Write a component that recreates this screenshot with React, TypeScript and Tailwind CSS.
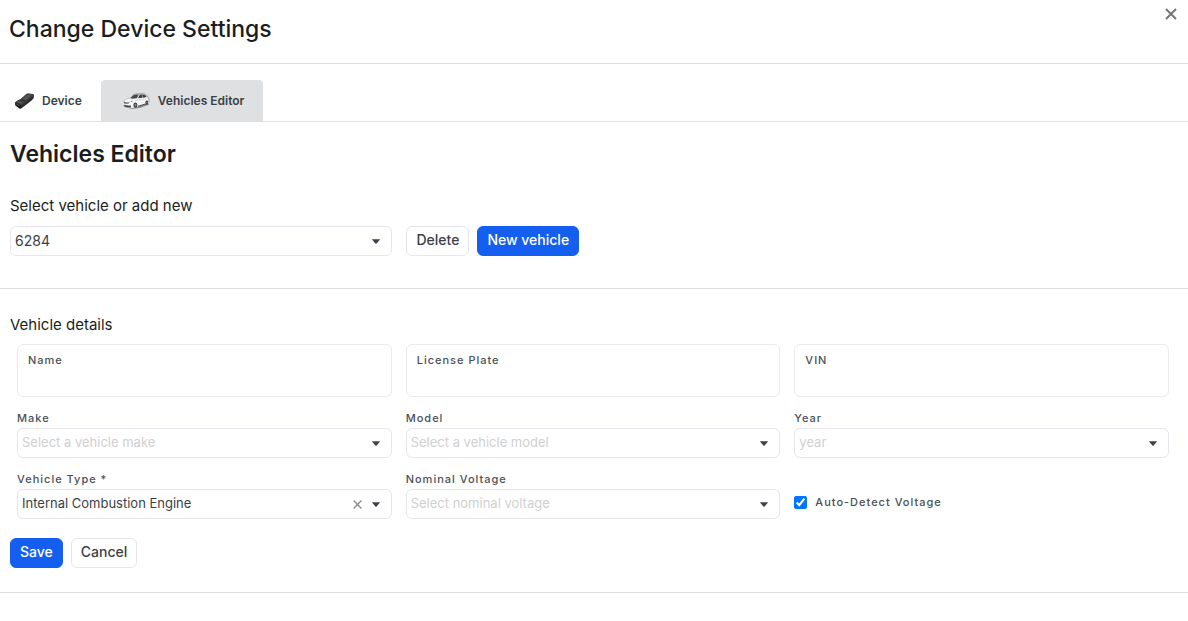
import type { ReactNode, SelectHTMLAttributes } from "react";

function Caret() {
  return (
    <svg viewBox="0 0 8 5" className="h-[5px] w-2 fill-[#3c434b]" aria-hidden="true">
      <path d="M0.3 0.2h7.4c0.3 0 0.3 0.4 0.1 0.6L4.6 4.5c-0.4 0.4-0.8 0.4-1.2 0L0.2 0.8C0 0.6 0 0.2 0.3 0.2z" />
    </svg>
  );
}

type PickerProps = SelectHTMLAttributes<HTMLSelectElement> & {
  option: string;
  muted?: boolean;
  large?: boolean;
  clearable?: boolean;
};

function Picker({ option, muted, large, clearable, ...rest }: PickerProps) {
  return (
    <div className="relative">
      <select
        {...rest}
        className={
          "block h-[30px] w-full appearance-none rounded-md border border-[#e6e6ec] bg-white pl-1 pr-12 " +
          (large ? "text-sm " : "text-[13px] ") +
          (muted ? "text-[#d0d0d0]" : "text-[#3a3f45]")
        }
      >
        <option>{option}</option>
      </select>
      <div className="pointer-events-none absolute inset-y-0 right-3 flex items-center gap-2.5">
        {clearable && (
          <button type="button" aria-label="Clear selection" className="pointer-events-auto">
            <svg viewBox="0 0 9 9" className="size-[9px] fill-none stroke-[#8c8c8c]" strokeWidth="1.4">
              <path d="M0.6 0.6l7.8 7.8M8.4 0.6L0.6 8.4" />
            </svg>
          </button>
        )}
        <Caret />
      </div>
    </div>
  );
}

const labelClass = "block text-[11px] leading-4 font-medium tracking-[1px] text-[#4a5057]";

function SelectField({ id, label, ...rest }: PickerProps & { id: string; label: string }) {
  return (
    <div>
      <label htmlFor={id} className={labelClass + " mb-0.5"}>
        {label}
      </label>
      <Picker id={id} {...rest} />
    </div>
  );
}

function TextField({ id, label }: { id: string; label: string }) {
  return (
    <div className="h-[53px] rounded-md border border-[#ebebee] px-2.5 pt-[7px]">
      <label htmlFor={id} className={labelClass}>
        {label}
      </label>
      <input id={id} type="text" className="block h-6 w-full bg-transparent text-sm outline-none" />
    </div>
  );
}

function ActionButton({ primary, children }: { primary?: boolean; children: ReactNode }) {
  return (
    <button
      type="button"
      className={
        "h-[30px] rounded-md border px-[9px] pb-0.5 text-sm font-medium whitespace-nowrap " +
        (primary ? "border-[#155ff0] bg-[#155ff0] text-white" : "border-[#e6e6ea] bg-white text-[#3a3f45]")
      }
    >
      {children}
    </button>
  );
}

function DongleIcon() {
  return (
    <svg viewBox="0 0 20 16" className="h-4 w-5" aria-hidden="true">
      <path d="M1 9.4L3.8 7.2 6.4 6.2 12.6 0.8 14 0.4 19.2 1 20 2.2 19.6 5.2 17.6 7.6 12.4 11.4 7.2 15.6 5.6 15.8 1.4 12.6z" fill="#2a2a2b" />
      <path d="M6.6 6.3L12.9 1.2 14.2 0.8 19.2 1.5 12.4 7.8z" fill="#464647" />
      <path d="M9 5.8L14.2 1.7 17 2.1 11.8 6.8z" fill="#58585a" />
      <path d="M1.4 9.5L4 7.5 6.6 6.6 11.6 8.2 7 12z" fill="#3c3c3e" />
      <path d="M1.2 9.8L6.6 12.4 6.4 15.4 1.6 12.3z" fill="#19191a" />
      <path d="M2.4 11.1L5.4 12.9M3.4 8.4L8.2 10.2" stroke="#808083" strokeWidth="0.7" />
      <path d="M7 12.2L12.4 8 19.6 2" fill="none" stroke="#5e5e60" strokeWidth="0.5" />
    </svg>
  );
}

function CarIcon() {
  return (
    <svg viewBox="0 0 28 16" className="h-4 w-7" aria-hidden="true">
      <path d="M1.4 13.4L10 16 18 15 27.2 11.6 26 10 12 12z" fill="#8f8f92" />
      <path d="M1.6 8C2.4 6.6 4.4 5.6 7.6 5L10.8 2.4C12 1.6 13 1.4 14.6 1.2L20.6 1C22.6 1.1 24.4 2 25.4 3.6L26.6 5.4C27.2 7 27.2 8.6 26.6 9.8L23.4 11 16 13.4 10 15 3.6 14.2 1.6 12.8z" fill="#f5f5f6" />
      <path d="M8 5.1L11 2.5C12 1.9 13 1.7 14 1.6L17 1.5 14.8 5.3 10.4 5.7z" fill="#47494d" />
      <path d="M15.8 5.3L17.8 1.6 21 1.5C22.8 1.7 23.8 2.4 24.8 3.8L22.4 4.6z" fill="#393b3f" />
      <path d="M17.5 1.6L15.3 5.4M20.2 1.6L20.6 4.9" stroke="#e0e0e1" strokeWidth="0.5" />
      <path d="M10.6 2.3C12 1 14 0.8 20.6 0.7 22.8 0.8 24.6 1.8 25.6 3.4L27 6V9" fill="none" stroke="#66676a" strokeWidth="0.6" />
      <path d="M1.5 8L4.6 6 8 5.1" fill="none" stroke="#96979a" strokeWidth="0.5" />
      <path d="M1.8 8.6L4.2 9.4 7.4 9.2 6.6 10.6 4 10.8 1.8 10.2z" fill="#56575b" />
      <path d="M8 8.4L10.8 7.6 9.8 9z" fill="#78797d" />
      <path d="M1.6 12L4.6 12.8 9 12.4 8.8 14.6 4 14.3 1.7 12.9z" fill="#3c3c40" />
      <path d="M2.4 12.1L6 12.9" stroke="#a8424b" strokeWidth="0.9" />
      <path d="M16 13.3L23.6 10.9" stroke="#4c4d51" strokeWidth="1.1" />
      <path d="M13.4 7.4L25.2 5.6" stroke="#b6b7ba" strokeWidth="0.5" />
      <ellipse cx="13.4" cy="12.1" rx="2" ry="2.7" fill="#333438" />
      <ellipse cx="13.5" cy="12.1" rx="1" ry="1.5" fill="#8c8d90" />
      <ellipse cx="24.8" cy="9.6" rx="1.4" ry="2.2" fill="#333438" />
      <ellipse cx="24.9" cy="9.6" rx="0.6" ry="1.1" fill="#8c8d90" />
    </svg>
  );
}

export default function App() {
  return (
    <main className="bg-white font-['Inter',sans-serif] text-[#1b1e21]">
      <header className="flex h-16 items-start justify-between border-b border-[#dee0e1] pl-[9px] pr-[11px]">
        <h1 className="pt-[13px] text-[23px] leading-8 font-medium">Change Device Settings</h1>
        <button type="button" aria-label="Close" className="mt-2">
          <svg viewBox="0 0 12 12" className="size-3 fill-none stroke-[#757575]" strokeWidth="2">
            <path d="M1 1l10 10M11 1L1 11" />
          </svg>
        </button>
      </header>

      <nav role="tablist" className="mt-4 flex border-b border-[#dee0e1] text-xs font-semibold text-[#3a3f45]">
        <button type="button" role="tab" aria-selected="false" className="flex h-[41px] items-center gap-2 pl-3.5 pr-[19px]">
          <DongleIcon />
          Device
        </button>
        <button
          type="button"
          role="tab"
          aria-selected="true"
          className="flex h-[41px] items-center gap-2 rounded-t bg-[#dee0e1] pl-[21px] pr-[19px]"
        >
          <CarIcon />
          Vehicles Editor
        </button>
      </nav>

      <section className="border-b border-[#dee0e1] pt-4 pb-8 pl-2.5 pr-[19px]">
        <h2 className="text-[23px] leading-8 font-semibold">Vehicles Editor</h2>
        <label htmlFor="vehicle" className="mt-6 block text-[15px] leading-6">
          Select vehicle or add new
        </label>
        <div className="mt-2 flex">
          <div className="w-[33%]">
            <Picker id="vehicle" option="6284" large />
          </div>
          <div className="ml-3.5 flex gap-2">
            <ActionButton>Delete</ActionButton>
            <ActionButton primary>New vehicle</ActionButton>
          </div>
        </div>
      </section>

      <form className="border-b border-[#dee0e1] pt-6 pb-6 pl-2.5 pr-[19px]">
        <h3 className="text-[15px] leading-6">Vehicle details</h3>
        <div className="mt-[7px] grid grid-cols-3 gap-x-3.5 gap-y-[13px] pl-[7px]">
          <TextField id="name" label="Name" />
          <TextField id="plate" label="License Plate" />
          <TextField id="vin" label="VIN" />
          <SelectField id="make" label="Make" option="Select a vehicle make" muted />
          <SelectField id="model" label="Model" option="Select a vehicle model" muted />
          <SelectField id="year" label="Year" option="year" muted />
          <SelectField id="type" label="Vehicle Type *" option="Internal Combustion Engine" clearable />
          <SelectField id="voltage" label="Nominal Voltage" option="Select nominal voltage" muted />
          <div className="flex items-center gap-2 pt-3.5">
            <input id="auto" type="checkbox" defaultChecked className="size-[13px] accent-[#0075ff]" />
            <label htmlFor="auto" className={labelClass}>
              Auto-Detect Voltage
            </label>
          </div>
        </div>
        <div className="mt-[19px] flex gap-2">
          <ActionButton primary>Save</ActionButton>
          <ActionButton>Cancel</ActionButton>
        </div>
      </form>
    </main>
  );
}
